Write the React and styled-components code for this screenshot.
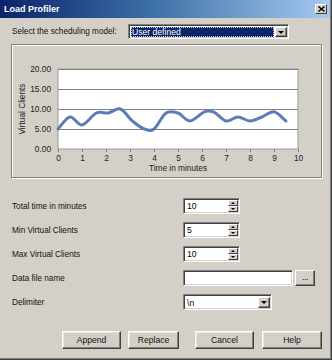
import React from 'react'
import styled, { createGlobalStyle } from 'styled-components'

const GlobalStyle = createGlobalStyle`
  html, body {
    margin: 0;
    padding: 0;
    background: #d4d0c8;
  }
  * {
    box-sizing: border-box;
  }
`

const Window = styled.div`
  width: 332px;
  height: 360px;
  background: #d4d0c8;
  font-family: 'Liberation Sans', Arial, sans-serif;
  font-size: 8.2px;
  color: #111;
  display: flex;
  flex-direction: column;
  box-shadow: inset -1px -1px 0 #404040, inset -2px -2px 0 #808080;
  overflow: hidden;
`

const TitleBar = styled.div`
  height: 18px;
  margin-right: 2px;
  background: linear-gradient(90deg, #0a246a 0%, #3a6ea5 45%, #a6caf0 100%);
  display: flex;
  align-items: center;
  justify-content: space-between;
  padding: 0 3px 0 4px;
  color: #fff;
  font-weight: bold;
  font-size: 9px;
`

const CloseBox = styled.div`
  width: 12px;
  height: 10px;
  background: #d4d0c8;
  border: 1px solid;
  border-color: #fff #404040 #404040 #fff;
  display: flex;
  align-items: center;
  justify-content: center;
`

const Content = styled.div`
  display: flex;
  flex-direction: column;
  padding: 6px 10px 0 11px;
`

const SelectRow = styled.div`
  display: grid;
  grid-template-columns: 117px 160px;
  align-items: center;
  height: 15px;
`

const Label = styled.span`
  padding-left: 1px;
  white-space: nowrap;
`

const Sunken = styled.div`
  height: ${p => p.h || 16}px;
  width: ${p => p.w}px;
  background: #fff;
  border: 1px solid;
  border-color: #808080 #fff #fff #808080;
  box-shadow: inset 1px 1px 0 #404040, inset -1px -1px 0 #d4d0c8;
  display: flex;
  align-items: stretch;
  padding: 2px;
`

const FieldText = styled.div`
  flex: 1;
  display: flex;
  align-items: center;
  padding-left: 1px;
  font-size: 8.6px;
  background: ${p => (p.selected ? '#0a246a' : 'transparent')};
  color: ${p => (p.selected ? '#fff' : '#000')};
  outline: ${p => (p.selected ? '1px dotted #d4d0c8' : 'none')};
  outline-offset: -1px;
  margin-right: 1px;
`

const DropButton = styled.div`
  width: 12px;
  background: #d4d0c8;
  border: 1px solid;
  border-color: #fff #404040 #404040 #fff;
  box-shadow: inset -1px -1px 0 #808080;
  display: flex;
  align-items: center;
  justify-content: center;
`

const Arrow = styled.span`
  width: 0;
  height: 0;
  border-left: ${p => p.s || 3}px solid transparent;
  border-right: ${p => p.s || 3}px solid transparent;
  ${p => (p.up ? 'border-bottom' : 'border-top')}: ${p => p.s || 3}px solid #000;
`

const ChartPanel = styled.div`
  margin-top: 5px;
  height: 134px;
  width: 311px;
  border: 1px solid #808080;
  box-shadow: 1px 1px 0 #fff, inset 1px 1px 0 #fff;
`

const Form = styled.div`
  margin-top: 20px;
  display: grid;
  grid-template-columns: 172px auto;
  grid-auto-rows: 16px;
  row-gap: 8px;
  align-items: center;
`

const Controls = styled.div`
  display: flex;
  align-items: center;
  gap: 2px;
  height: 16px;
`

const SpinColumn = styled.div`
  width: 10px;
  display: flex;
  flex-direction: column;
`

const SpinButton = styled.div`
  flex: 1;
  background: #d4d0c8;
  border: 1px solid;
  border-color: #fff #404040 #404040 #fff;
  display: flex;
  align-items: center;
  justify-content: center;
`

const SmallButton = styled.div`
  width: 20px;
  height: 16px;
  background: #d4d0c8;
  border: 1px solid;
  border-color: #fff #404040 #404040 #fff;
  box-shadow: inset -1px -1px 0 #808080;
  display: flex;
  align-items: center;
  justify-content: center;
  font-size: 9px;
  letter-spacing: -0.5px;
  padding-bottom: 2px;
`

const ButtonRow = styled.div`
  margin-top: 21px;
  display: flex;
  padding-left: 51px;
`

const Button = styled.div`
  width: ${p => p.w}px;
  margin-right: ${p => p.gap || 0}px;
  height: 18px;
  background: #d4d0c8;
  border: 1px solid;
  border-color: #fff #404040 #404040 #fff;
  box-shadow: inset -1px -1px 0 #808080, inset 1px 1px 0 #e8e6e0;
  display: flex;
  align-items: center;
  justify-content: center;
  font-size: 8.6px;
`

const pts = [
  [0, 5], [0.5, 8], [1, 6], [1.6, 9], [2.1, 9], [2.6, 10], [3.1, 7], [3.6, 5],
  [4, 5], [4.5, 9], [5, 9], [5.5, 7], [6.1, 9.3], [6.5, 9.2], [7, 7], [7.5, 8],
  [8, 7], [8.5, 8], [9, 9.3], [9.5, 7],
]

const PX = t => 46 + 24 * t
const PY = v => 104 - 4 * v

// catmull-rom through the sample points
const curvePath = () => {
  const p = pts.map(([t, v]) => [PX(t), PY(v)])
  let d = `M${p[0][0]},${p[0][1]}`
  for (let i = 0; i < p.length - 1; i++) {
    const p0 = p[i - 1] || p[i]
    const p1 = p[i]
    const p2 = p[i + 1]
    const p3 = p[i + 2] || p2
    const c1x = p1[0] + (p2[0] - p0[0]) / 6
    const c1y = p1[1] + (p2[1] - p0[1]) / 6
    const c2x = p2[0] - (p3[0] - p1[0]) / 6
    const c2y = p2[1] - (p3[1] - p1[1]) / 6
    d += ` C${c1x.toFixed(1)},${c1y.toFixed(1)} ${c2x.toFixed(1)},${c2y.toFixed(1)} ${p2[0].toFixed(1)},${p2[1].toFixed(1)}`
  }
  return d
}

const Chart = () => (
  <svg width="309" height="132" style={{ display: 'block' }} fontFamily="'Liberation Sans', Arial, sans-serif" fontSize="8.3" fill="#222">
    <rect x="46" y="24" width="240" height="80" fill="#fff" stroke="#9a9a9a" strokeWidth="1" />
    {[15, 10, 5].map(v => (
      <line key={v} x1="46" x2="286" y1={PY(v) + 0.5} y2={PY(v) + 0.5} stroke="#808080" />
    ))}
    <line x1="46" x2="286" y1="24.5" y2="24.5" stroke="#808080" />
    {[20, 15, 10, 5, 0].map(v => (
      <text key={v} x="39" y={PY(v) + 3} textAnchor="end">{v.toFixed(2)}</text>
    ))}
    {[0, 1, 2, 3, 4, 5, 6, 7, 8, 9, 10].map(t => (
      <g key={t}>
        <line x1={PX(t) + 0.5} x2={PX(t) + 0.5} y1="104" y2="107" stroke="#808080" />
        <text x={PX(t) + 0.5} y="116" textAnchor="middle">{t}</text>
      </g>
    ))}
    <text x="166" y="126" textAnchor="middle">Time in minutes</text>
    <text transform="translate(13,64) rotate(-90)" textAnchor="middle">Virtual Clients</text>
    <path d={curvePath()} fill="none" stroke="#5b7cb6" strokeWidth="3" strokeLinecap="round" />
  </svg>
)

const Spin = ({ value }) => (
  <Sunken w={57} style={{ padding: '1px 1px 1px 2px' }}>
    <FieldText>{value}</FieldText>
    <SpinColumn>
      <SpinButton><Arrow up s={2} /></SpinButton>
      <SpinButton><Arrow s={2} /></SpinButton>
    </SpinColumn>
  </Sunken>
)

const App = () => {
  return (
    <Window>
      <GlobalStyle />
      <TitleBar>
        <span>Load Profiler</span>
        <CloseBox>
          <svg width="7" height="6" viewBox="0 0 7 6">
            <path d="M0.5,0.5 L6.5,5.5 M6.5,0.5 L0.5,5.5" stroke="#000" strokeWidth="1.4" />
          </svg>
        </CloseBox>
      </TitleBar>
      <Content>
        <SelectRow>
          <Label>Select the scheduling model:</Label>
          <Sunken w={161} h={15} style={{ padding: '2px 1px 1px 2px' }}>
            <FieldText selected>User defined</FieldText>
            <DropButton><Arrow /></DropButton>
          </Sunken>
        </SelectRow>
        <ChartPanel>
          <Chart />
        </ChartPanel>
        <Form>
          <Label>Total time in minutes</Label>
          <Controls><Spin value="10" /></Controls>
          <Label>Min Virtual Clients</Label>
          <Controls><Spin value="5" /></Controls>
          <Label>Max Virtual Clients</Label>
          <Controls><Spin value="10" /></Controls>
          <Label>Data file name</Label>
          <Controls>
            <Sunken w={110} />
            <SmallButton>...</SmallButton>
          </Controls>
          <Label>Delimiter</Label>
          <Controls>
            <Sunken w={89} style={{ padding: '2px 1px 1px 2px' }}>
              <FieldText>\n</FieldText>
              <DropButton><Arrow /></DropButton>
            </Sunken>
          </Controls>
        </Form>
        <ButtonRow>
          <Button w={59} gap={7}>Append</Button>
          <Button w={51} gap={16}>Replace</Button>
          <Button w={59} gap={8}>Cancel</Button>
          <Button w={60}>Help</Button>
        </ButtonRow>
      </Content>
    </Window>
  )
}

export default App
